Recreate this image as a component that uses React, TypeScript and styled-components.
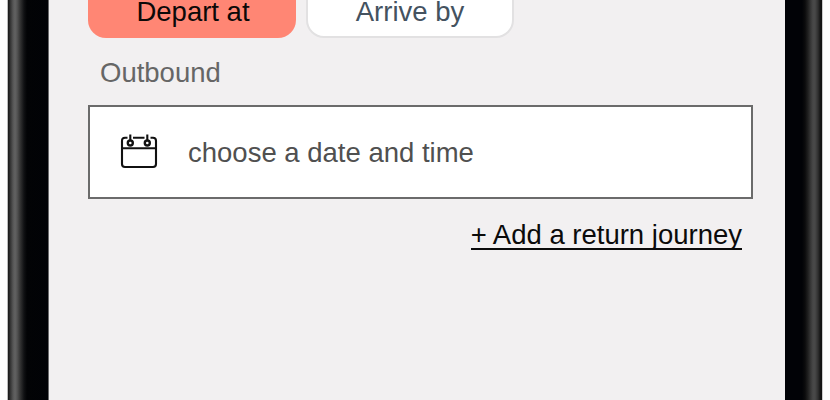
import React from "react";
import styled, { createGlobalStyle } from "styled-components";

const GlobalStyle = createGlobalStyle`
  * { box-sizing: border-box; }
  body {
    margin: 0;
    background: #fefefe;
    overflow: hidden;
    font-family: "Liberation Sans", Arial, sans-serif;
    font-size: 27.5px;
    line-height: 32px;
  }
`;

const Phone = styled.main`
  display: grid;
  grid-template-columns: 42px 736px 38px;
  width: 816px;
  height: 400px;
  margin-left: 7px;
`;

const Bezel = styled.div<{ $side: "left" | "right" }>`
  background: ${({ $side }) =>
    $side === "left"
      ? "linear-gradient(90deg, #bbb 0, #bbb 1px, #151515 1px, #303030 3px, #555 6px, #626262 8px, #555 10px, #353535 13px, #101113 17px, #020305 20px, #010206 41px, #6a6a6c 41px)"
      : "linear-gradient(270deg, #ccc 0, #ccc 1px, #111 1px, #181818 3px, #303030 5px, #484848 8px, #484848 10px, #3a3a3a 12px, #202020 15px, #0b0b0c 18px, #010206 21px, #010206 100%)"};
`;

const Screen = styled.section`
  display: flex;
  flex-direction: column;
  background: #f2f0f1;
  padding: 0 32px 0 39px;
`;

const Modes = styled.div`
  display: flex;
  gap: 10px;
  height: 38px;
`;

const ModeButton = styled.button<{ $active?: boolean }>`
  width: 208px;
  height: 76px;
  margin-top: -38px;
  padding: ${({ $active }) => ($active ? "23px 0 0 2px" : "23px 0 0")};
  border: ${({ $active }) => ($active ? "0" : "2px solid #e2e1e2")};
  border-radius: 18px;
  background: ${({ $active }) => ($active ? "#ff8674" : "#fff")};
  color: ${({ $active }) => ($active ? "#0c0908" : "#44525f")};
  font: inherit;
  white-space: nowrap;
`;

const Label = styled.label`
  margin: 19px 0 0 12px;
  height: 48px;
  color: #666;
`;

const DateField = styled.button`
  display: flex;
  align-items: center;
  width: 665px;
  height: 94px;
  padding: 0 0 0 30px;
  border: 2px solid #6b6b6b;
  background: #fff;
  color: #505050;
  font: inherit;
  text-align: left;
`;

const DateText = styled.span`
  margin-left: 30px;
  padding-top: 2px;
`;

const ReturnLink = styled.a`
  align-self: flex-end;
  height: 31px;
  margin: 20px 11px 0 0;
  border-bottom: 2px solid #0b0b0b;
  color: #0b0b0b;
  white-space: nowrap;
`;

const CalendarIcon = () => (
  <svg width="38" height="38" viewBox="0 0 38 38" fill="none" stroke="#111" strokeWidth="2.1">
    <path d="M7.5 4.7H5Q2 4.7 2 7.7V31Q2 34 5 34H33Q36 34 36 31V7.7Q36 4.7 33 4.7H30.5M13 4.7H24.5M2 15.2H36" />
    <path d="M10.3 1.5V8M27.3 1.5V8" />
    <circle cx="10.3" cy="10" r="2.5" strokeWidth="2.4" />
    <circle cx="27.3" cy="10" r="2.5" strokeWidth="2.4" />
  </svg>
);

export default function App() {
  return (
    <>
      <GlobalStyle />
      <Phone>
        <Bezel $side="left" />
        <Screen>
          <Modes>
            <ModeButton $active>Depart at</ModeButton>
            <ModeButton>Arrive by</ModeButton>
          </Modes>
          <Label>Outbound</Label>
          <DateField>
            <CalendarIcon />
            <DateText>choose a date and time</DateText>
          </DateField>
          <ReturnLink>+ Add a return journey</ReturnLink>
        </Screen>
        <Bezel $side="right" />
      </Phone>
    </>
  );
}
